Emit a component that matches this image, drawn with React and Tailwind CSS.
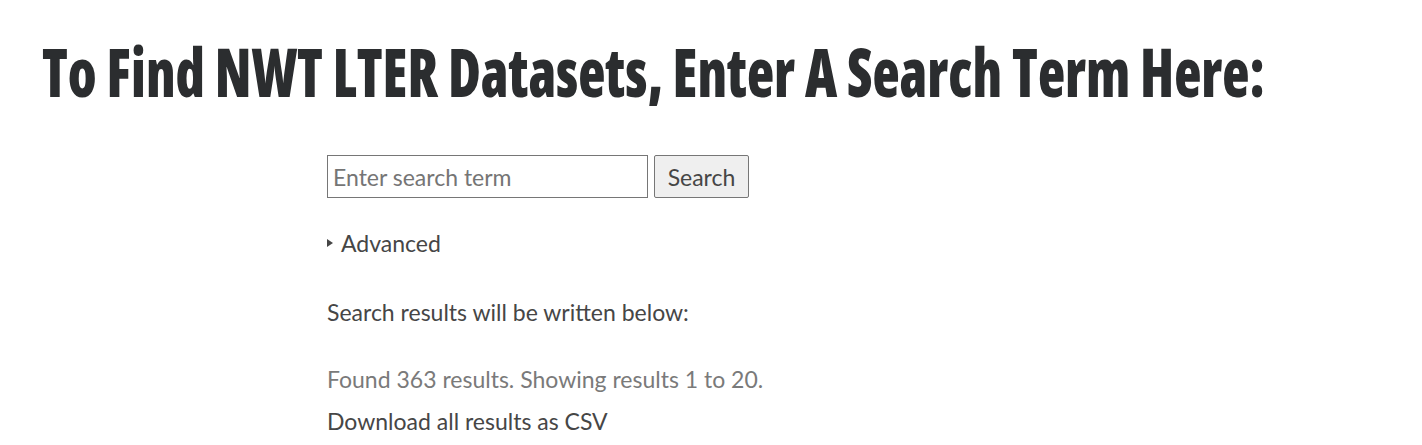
export default function App() {
  return (
    <div className="min-h-screen overflow-hidden bg-white">
      <h1 className="h-[122px] overflow-hidden pl-[42px] pt-[31px] whitespace-nowrap text-[68px] leading-[80px] font-extrabold text-[#2b2d2f] [font-stretch:condensed] [font-family:'Open_Sans',sans-serif]">
        <span className="inline-block origin-left scale-x-[0.825]">
          To Find NWT LTER Datasets, Enter A Search Term Here:
        </span>
      </h1>
      <div className="pl-[327px] pt-[33px] text-[23px] leading-[28px] text-[#464646] [font-family:Lato,sans-serif]">
        <form className="flex gap-[6px]" onSubmit={(e) => e.preventDefault()}>
          <input
            type="text"
            placeholder="Enter search term"
            className="h-[43px] w-[321px] border border-[#767676] px-[5px] text-[23px] placeholder:text-[#757575] outline-none"
          />
          <button
            type="submit"
            className="h-[43px] w-[95px] rounded-[2px] border border-[#767676] bg-[#efefef] text-[23px] text-[#464646]"
          >
            Search
          </button>
        </form>
        <div className="mt-[31px] flex items-center gap-[8px]">
          <span className="h-0 w-0 border-y-[4px] border-l-[6px] border-y-transparent border-l-[#464646]"></span>
          <span>Advanced</span>
        </div>
        <p className="mt-[41px]">Search results will be written below:</p>
        <p className="mt-[39px] text-[#7a7a7a]">Found 363 results. Showing results 1 to 20.</p>
        <p className="mt-[14px]">Download all results as CSV</p>
      </div>
    </div>
  )
}
